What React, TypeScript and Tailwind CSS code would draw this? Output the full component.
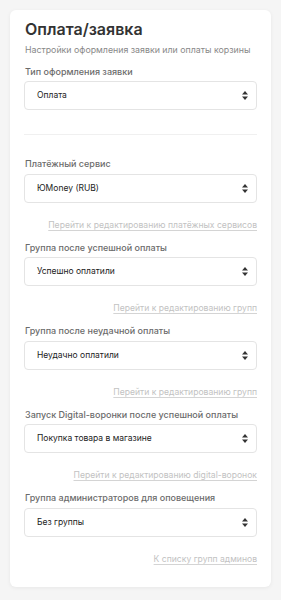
import { JSX } from "react";

const Chevron = (): JSX.Element => (
    <svg width="6" height="9" viewBox="0 0 6 9" className="shrink-0">
        <path d="M3 0 L6 3.6 L0 3.6 Z" fill="#333" />
        <path d="M3 9 L6 5.4 L0 5.4 Z" fill="#333" />
    </svg>
);

const Select = ({ value }: { value: string }): JSX.Element => (
    <div className="mt-[3.5px] h-[29px] flex items-center justify-between pl-[12px] pr-[8px] border border-[#e4e4e4] rounded-[4px] bg-white">
        <span className="text-[8.5px] text-[#222] leading-none">{value}</span>
        <Chevron />
    </div>
);

const Label = ({ text, className = "" }: { text: string; className?: string }): JSX.Element => (
    <div className={`text-[9px] leading-[13px] text-[#6b6b6b] font-medium ${className}`}>{text}</div>
);

const Link = ({ text }: { text: string }): JSX.Element => (
    <div className="mt-[16px] flex justify-end">
        <a href="/#" className="text-[8.6px] leading-[13px] text-[#c2c2c2] underline decoration-[#d4d4d4] underline-offset-[2px]">
            {text}
        </a>
    </div>
);

const sections = [
    {
        label: "Платёжный сервис",
        value: "ЮMoney (RUB)",
        link: "Перейти к редактированию платёжных сервисов",
    },
    {
        label: "Группа после успешной оплаты",
        value: "Успешно оплатили",
        link: "Перейти к редактированию групп",
    },
    {
        label: "Группа после неудачной оплаты",
        value: "Неудачно оплатили",
        link: "Перейти к редактированию групп",
    },
    {
        label: "Запуск Digital-воронки после успешной оплаты",
        value: "Покупка товара в магазине",
        link: "Перейти к редактированию digital-воронок",
    },
    {
        label: "Группа администраторов для оповещения",
        value: "Без группы",
        link: "К списку групп админов",
    },
];

const App = (): JSX.Element => {
    return (
        <div className="min-h-[600px] bg-[#f5f5f5] pt-[10px] px-[10px] pb-[11px]" style={{ fontFamily: "Inter, 'Noto Sans', sans-serif" }}>
            <div className="bg-white rounded-[6px] shadow-[0_1px_4px_rgba(0,0,0,0.06)] px-[14px] pt-[10px] pb-[21px]">
                <h1 className="text-[16px] leading-[19px] font-semibold text-[#333] pl-[1px]">Оплата/заявка</h1>
                <p className="mt-[3.5px] text-[8.8px] leading-[13px] text-[#888] pl-[1px]">
                    Настройки оформления заявки или оплаты корзины
                </p>
                <Label text="Тип оформления заявки" className="mt-[9px] pl-[1px]" />
                <Select value="Оплата" />
                <div className="mt-[24px] h-px bg-[#f0f0f0]" />
                {sections.map((s, i) => (
                    <div key={s.label}>
                        <Label text={s.label} className={i === 0 ? "mt-[22px] pl-[1px]" : "mt-[9px] pl-[1px]"} />
                        <Select value={s.value} />
                        <Link text={s.link} />
                    </div>
                ))}
            </div>
        </div>
    );
};

export default App;
